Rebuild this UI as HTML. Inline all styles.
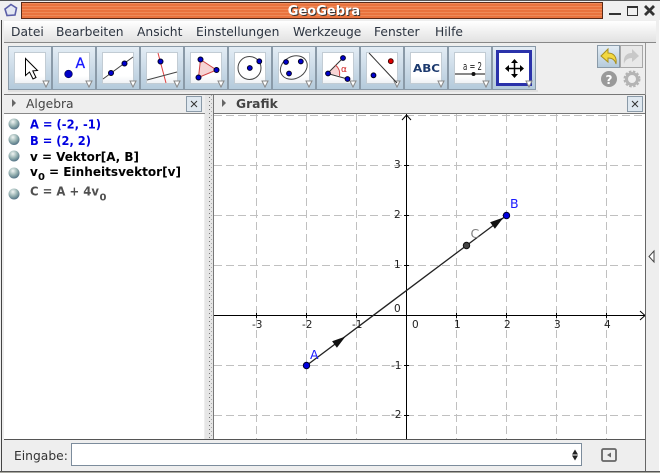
<!DOCTYPE html>
<html><head><meta charset="utf-8"><style>
html,body{margin:0;padding:0;background:#eee;overflow:hidden}
svg{display:block}
text{font-family:"DejaVu Sans",sans-serif}
</style></head><body>
<svg xmlns="http://www.w3.org/2000/svg" width="660" height="473" viewBox="0 0 660 473">
<defs>
<linearGradient id="btn" x1="0" y1="0" x2="0" y2="1"><stop offset="0" stop-color="#e4edf5"/><stop offset="1" stop-color="#b4cadb"/></linearGradient>
<linearGradient id="menu" x1="0" y1="0" x2="0" y2="1"><stop offset="0" stop-color="#fff"/><stop offset="1" stop-color="#e2e2e2"/></linearGradient>
<linearGradient id="white" x1="0" y1="0" x2="0" y2="1"><stop offset="0" stop-color="#fff"/><stop offset=".75" stop-color="#fff"/><stop offset="1" stop-color="#eef1f4"/></linearGradient>
<radialGradient id="ball" cx=".4" cy=".3" r=".8"><stop offset="0" stop-color="#f2f6f4"/><stop offset=".5" stop-color="#94b0b0"/><stop offset="1" stop-color="#3f6078"/></radialGradient>
<pattern id="stripe" width="4" height="3" patternUnits="userSpaceOnUse"><rect width="4" height="3" fill="#e9733e"/><rect width="4" height="1" fill="#ef8a58"/></pattern>
<pattern id="dots" width="4" height="4" patternUnits="userSpaceOnUse"><rect x="1" y="1" width="1" height="1" fill="#777"/><rect x="3" y="3" width="1" height="1" fill="#aaa"/></pattern>
<g id="tri"><path d="M0 0h6l-3 6z" fill="#fff" stroke="#888" stroke-width="1"/></g>
</defs>

<rect width="660" height="473" fill="#eeeeee"/>
<!-- title bar -->
<rect width="660" height="20" fill="#f0f0f0"/>
<rect x="0" y="0" width="660" height="1" fill="#555"/>
<rect x="21.500" y="2.500" width="581" height="16" fill="url(#stripe)" stroke="#5a2a18"/>
<path d="M11 4.500L16.500 8 15 15 7 15.500 5 9z" fill="#e4e8f2" stroke="#5b5fa8" stroke-width="1.600"/>
<text x="325" y="16" font-size="13" font-weight="bold" fill="#333" text-anchor="middle">GeoGebra</text>
<text x="324" y="15" font-size="13" font-weight="bold" fill="#fff" text-anchor="middle">GeoGebra</text>
<rect x="609" y="13" width="12" height="2" fill="#333"/>
<rect x="627.500" y="6.500" width="10" height="9" fill="none" stroke="#333"/><rect x="627" y="6" width="11" height="2" fill="#333"/>
<path d="M645 6l9 9M654 6l-9 9" stroke="#333" stroke-width="2.800"/>

<!-- frame sides -->
<rect x="0" y="20" width="4" height="453" fill="#eeeeee"/>
<rect x="1" y="20" width="1" height="452" fill="#444"/>
<rect x="0" y="471" width="660" height="2" fill="#a8a8a0"/>
<rect x="0" y="471" width="660" height="1" fill="#555"/>
<rect x="656" y="20" width="3" height="451" fill="#eeeeee"/>
<rect x="659" y="20" width="1" height="451" fill="#fff"/>

<!-- menu -->
<rect x="4" y="21" width="652" height="21" fill="url(#menu)"/>
<rect x="4" y="42" width="652" height="1" fill="#888"/>
<g font-size="12.300" fill="#2c3440">
<text x="11" y="36">Datei</text><text x="56" y="36">Bearbeiten</text><text x="137" y="36">Ansicht</text><text x="196" y="36">Einstellungen</text><text x="293" y="36">Werkzeuge</text><text x="374" y="36">Fenster</text><text x="435" y="36">Hilfe</text>
</g>

<!-- toolbar -->
<rect x="4" y="43" width="652" height="51" fill="#eeeeee"/>
<rect x="4" y="94" width="641" height="1" fill="#777"/>
<rect x="645" y="43" width="1" height="52" fill="#999"/>
<rect x="8" y="90" width="530" height="2" fill="#e0e0e0"/>

<g id="buttons">
<g stroke="#8a9aa8" stroke-width="1" fill="url(#btn)">
<rect x="8.500" y="46.500" width="43" height="43"/><rect x="52.500" y="46.500" width="43" height="43"/><rect x="96.500" y="46.500" width="43" height="43"/><rect x="140.500" y="46.500" width="43" height="43"/><rect x="184.500" y="46.500" width="43" height="43"/><rect x="228.500" y="46.500" width="43" height="43"/><rect x="272.500" y="46.500" width="43" height="43"/><rect x="316.500" y="46.500" width="43" height="43"/><rect x="360.500" y="46.500" width="43" height="43"/><rect x="404.500" y="46.500" width="43" height="43"/><rect x="448.500" y="46.500" width="43" height="43"/><rect x="492.500" y="46.500" width="43" height="43"/>
</g>
<g stroke="#c2ccd4" stroke-width="1" fill="url(#white)">
<rect x="14.500" y="52.500" width="31" height="31"/><rect x="58.500" y="52.500" width="31" height="31"/><rect x="102.500" y="52.500" width="31" height="31"/><rect x="146.500" y="52.500" width="31" height="31"/><rect x="190.500" y="52.500" width="31" height="31"/><rect x="234.500" y="52.500" width="31" height="31"/><rect x="278.500" y="52.500" width="31" height="31"/><rect x="322.500" y="52.500" width="31" height="31"/><rect x="366.500" y="52.500" width="31" height="31"/><rect x="410.500" y="52.500" width="31" height="31"/><rect x="454.500" y="52.500" width="31" height="31"/>
</g>
<rect x="497.500" y="51.500" width="33" height="33" fill="#fff" stroke="#2a32aa" stroke-width="3"/>
<use href="#tri" x="43" y="81"/><use href="#tri" x="86" y="81"/><use href="#tri" x="130" y="81"/><use href="#tri" x="174" y="81"/><use href="#tri" x="218" y="81"/><use href="#tri" x="262" y="81"/><use href="#tri" x="306" y="81"/><use href="#tri" x="350" y="81"/><use href="#tri" x="394" y="81"/><use href="#tri" x="438" y="81"/><use href="#tri" x="483" y="81"/><use href="#tri" x="526" y="81"/>
</g>

<!-- 1 cursor -->
<path d="M25.500 58.500v17l4-3.500 3.500 7 3-1.500-3.200-6.600 4.700-.4z" fill="#fff" stroke="#000" stroke-width="1"/>
<!-- 2 point -->
<circle cx="68.500" cy="74" r="3.800" fill="#0000c8" stroke="#00004a" stroke-width=".7"/>
<text x="75.500" y="68" font-size="14" fill="#1a1aff" stroke="#1a1aff" stroke-width=".3">A</text>
<!-- 3 line -->
<path d="M103 79l30-22" stroke="#444" stroke-width="1"/>
<circle cx="111" cy="73" r="2.500" fill="#0000d0" stroke="#002"/><circle cx="124.500" cy="63.500" r="2.500" fill="#0000d0" stroke="#002"/>
<!-- 4 perpendicular -->
<path d="M158 53l8 30" stroke="#e04040" stroke-width="1"/>
<path d="M147 80l30-8" stroke="#444" stroke-width="1"/>
<circle cx="160.500" cy="61.500" r="2.500" fill="#0000d0" stroke="#002"/>
<!-- 5 polygon -->
<path d="M200.500 59.500l16 10.500-18 7.500z" fill="#f6d4d4" stroke="#d04040" stroke-width="1"/>
<circle cx="200.500" cy="59.500" r="2.500" fill="#0000d0" stroke="#002"/><circle cx="216.500" cy="70" r="2.500" fill="#0000d0" stroke="#002"/><circle cx="198.500" cy="77.500" r="2.500" fill="#0000d0" stroke="#002"/>
<!-- 6 circle -->
<circle cx="249.500" cy="68" r="11.500" fill="none" stroke="#444"/>
<circle cx="249.800" cy="68" r="2.400" fill="#0000d0" stroke="#002"/><circle cx="259.300" cy="61.300" r="2.400" fill="#0000d0" stroke="#002"/>
<!-- 7 ellipse -->
<ellipse cx="293.800" cy="67.500" rx="14" ry="11" transform="rotate(-28 293.800 67.500)" fill="none" stroke="#444"/>
<circle cx="286" cy="62" r="2.400" fill="#0000d0" stroke="#002"/><circle cx="300.800" cy="61.500" r="2.400" fill="#0000d0" stroke="#002"/><circle cx="289" cy="73.500" r="2.400" fill="#0000d0" stroke="#002"/>
<!-- 8 angle -->
<path d="M328 73.500l8-9 4 11z" fill="#f7d4d4"/>
<path d="M343 58l-15.500 15.500 20 5.500" fill="none" stroke="#333"/>
<path d="M335.500 65a12 12 0 0 1 4 11" fill="none" stroke="#d04040"/>
<circle cx="328" cy="73.500" r="2.400" fill="#0000d0" stroke="#002"/><circle cx="343" cy="58" r="2.400" fill="#0000d0" stroke="#002"/><circle cx="347.500" cy="79" r="2.400" fill="#0000d0" stroke="#002"/>
<text x="341" y="72" font-size="9" fill="#d02020">α</text>
<!-- 9 line reflect -->
<path d="M369 53l28 30" stroke="#333" stroke-width="1"/>
<circle cx="390.800" cy="61.200" r="2.400" fill="#e00000" stroke="#400"/><circle cx="373.500" cy="75.300" r="2.400" fill="#0000d0" stroke="#002"/>
<!-- 10 ABC -->
<text x="413" y="72" font-size="11" font-weight="bold" fill="#1c3a6e" textLength="27" lengthAdjust="spacingAndGlyphs">ABC</text>
<!-- 11 slider -->
<text x="463" y="70" font-size="10.500" fill="#222" textLength="19" lengthAdjust="spacingAndGlyphs">a = 2</text>
<path d="M455 74h30" stroke="#111"/><circle cx="473.500" cy="74" r="2" fill="#111"/>
<!-- 12 move -->
<path d="M514.500 60v17M506 68.500h17" stroke="#000" stroke-width="1.500"/>
<path d="M514.500 59l-3.500 4h7zM514.500 78l-3.500-4h7zM505 68.500l4-3.500v7zM524 68.500l-4-3.500v7z" fill="#000"/>

<!-- undo/redo -->
<rect x="597.500" y="45.500" width="22" height="22" fill="url(#btn)" stroke="#8a9aa8"/>
<rect x="620.500" y="45.500" width="22" height="22" fill="#e8e8e8" stroke="#a8a8a8"/>
<path d="M601 56l7-7v4c6 0 9 4 8 11-1-4-4-6-8-6v4z" fill="#f3d840" stroke="#a89020"/>
<path d="M639 56l-7-7v4c-6 0-9 4-8 11 1-4 4-6 8-6v4z" fill="#c8c8c8"/>
<circle cx="609" cy="79" r="8" fill="#9a9a9a"/>
<text x="609" y="84" font-size="12" font-weight="bold" fill="#fff" text-anchor="middle">?</text>
<circle cx="632" cy="79" r="5.500" fill="none" stroke="#b4b4b4" stroke-width="3"/>
<circle cx="632" cy="79" r="7.500" fill="none" stroke="#b4b4b4" stroke-width="2" stroke-dasharray="2.500 1.500"/>

<!-- algebra header -->
<rect x="4" y="95" width="201" height="18" fill="#eeeeee"/>
<rect x="4" y="113" width="201" height="1" fill="#888"/>
<path d="M12 99l4 4-4 4z" fill="#666"/>
<text x="26" y="108" font-size="12.300" fill="#444">Algebra</text>
<rect x="186.500" y="96.500" width="15" height="15" fill="#dfe8f0" stroke="#8a9aa8"/>
<path d="M191 101l6 6M197 101l-6 6" stroke="#333"/>

<!-- algebra panel -->
<rect x="4" y="114" width="200" height="325" fill="#fff"/>
<g>
<circle cx="14" cy="124" r="5.500" fill="url(#ball)"/><circle cx="14" cy="139.500" r="5.500" fill="url(#ball)"/><circle cx="14" cy="156" r="5.500" fill="url(#ball)"/><circle cx="14" cy="173" r="5.500" fill="url(#ball)"/><circle cx="14" cy="194" r="5.500" fill="url(#ball)"/>
</g>
<g font-size="12" font-weight="bold">
<text x="30" y="128.500" fill="#0000e0" textLength="71" lengthAdjust="spacingAndGlyphs">A = (-2, -1)</text>
<text x="30" y="145" fill="#0000e0" textLength="61" lengthAdjust="spacingAndGlyphs">B = (2, 2)</text>
<text x="30" y="161" fill="#000" textLength="109" lengthAdjust="spacingAndGlyphs">v = Vektor[A, B]</text>
<text x="30" y="176" fill="#000">v</text><text x="38" y="180" font-size="10" fill="#000">0</text>
<text x="49" y="176" fill="#000" textLength="132" lengthAdjust="spacingAndGlyphs">= Einheitsvektor[v]</text>
<text x="30" y="195.500" fill="#505050" textLength="69" lengthAdjust="spacingAndGlyphs">C = A + 4v</text><text x="99.500" y="200.500" font-size="10" fill="#505050">0</text>
</g>

<!-- splitter -->
<rect x="205" y="95" width="8" height="344" fill="#e6e6e6"/>
<rect x="208" y="95" width="4" height="344" fill="url(#dots)"/>
<rect x="213" y="95" width="1" height="344" fill="#777"/>

<!-- grafik header -->
<rect x="214" y="95" width="431" height="18" fill="#eeeeee"/>
<rect x="214" y="113" width="431" height="1" fill="#777"/>
<path d="M222 99l4 4-4 4z" fill="#666"/>
<text x="236" y="108" font-size="12.300" font-weight="bold" fill="#444">Grafik</text>
<rect x="627.500" y="96.500" width="15" height="15" fill="#dfe8f0" stroke="#8a9aa8"/>
<path d="M632 101l6 6M638 101l-6 6" stroke="#333"/>

<!-- graphics -->
<rect x="214" y="114" width="431" height="325" fill="#fff"/>
<g stroke="#c0c0c0" stroke-width="1" stroke-dasharray="8 4">
<path d="M256.500 114v325M306.500 114v325M356.500 114v325M456.500 114v325M506.500 114v325M556.500 114v325M606.500 114v325"/>
<path d="M214 115.500h431M214 165.500h431M214 215.500h431M214 265.500h431M214 365.500h431M214 415.500h431"/>
</g>
<!-- axes -->
<path d="M214 315.500h431M406.500 114v325" stroke="#000" stroke-width="1"/>
<path d="M402 120l4.500-5 4.500 5M640 311l5 4.500-5 4.500" fill="none" stroke="#000"/>
<path d="M256.500 313v5M306.500 313v5M356.500 313v5M456.500 313v5M506.500 313v5M556.500 313v5M606.500 313v5M404 165.500h5M404 215.500h5M404 265.500h5M404 365.500h5M404 415.500h5" stroke="#000"/>
<g font-size="10.500" fill="#222">
<text x="252" y="328">-3</text><text x="302" y="328">-2</text><text x="352" y="328">-1</text><text x="412" y="328">0</text><text x="454" y="328">1</text><text x="504" y="328">2</text><text x="554" y="328">3</text><text x="604" y="328">4</text>
<text x="394" y="168">3</text><text x="394" y="218">2</text><text x="394" y="268">1</text><text x="394" y="312">0</text><text x="391" y="369">-1</text><text x="391" y="418">-2</text>
</g>
<!-- vector -->
<path d="M306.500 365.500L506.500 215.500" stroke="#222" stroke-width="1.300"/>
<path d="M345.500 336.500l-13.400 4.800 4.800 6.400z" fill="#111"/>
<path d="M503.500 217.500l-13.400 4.800 4.800 6.400z" fill="#111"/>
<circle cx="466.500" cy="245.500" r="3.200" fill="#444" stroke="#111"/>
<circle cx="306.500" cy="365.500" r="3.200" fill="#0000e0" stroke="#003"/>
<circle cx="506.500" cy="215.500" r="3.200" fill="#0000e0" stroke="#003"/>
<g font-size="12.500">
<text x="310" y="359" fill="#1a1aff">A</text>
<text x="510" y="208" fill="#1a1aff">B</text>
<text x="470.500" y="238" fill="#808080">C</text>
</g>

<!-- right collapsed strip -->
<rect x="645" y="95" width="11" height="344" fill="#eeeeee"/>
<rect x="645" y="95" width="1" height="376" fill="#666"/>
<path d="M654 251l-5 5.500 5 5.500z" fill="#fff" stroke="#444"/>

<!-- input bar -->
<rect x="4" y="439" width="652" height="32" fill="#eeeeee"/>
<rect x="4" y="439" width="641" height="1" fill="#555"/>
<rect x="645" y="439" width="1" height="32" fill="#666"/>
<text x="14" y="460" font-size="12.300" fill="#333">Eingabe:</text>
<rect x="71.500" y="443.500" width="510" height="22" fill="#fff" stroke="#7c8c9c"/>
<path d="M575 449.500l-3 5h6zM575 460.500l-3-5h6z" fill="#222"/>
<rect x="602" y="449" width="14" height="12" rx="1.500" fill="#eee" stroke="#666" stroke-width="1.800"/>
<path d="M611 452.500v5l-4-2.500z" fill="#666"/>
</svg>
</body></html>
